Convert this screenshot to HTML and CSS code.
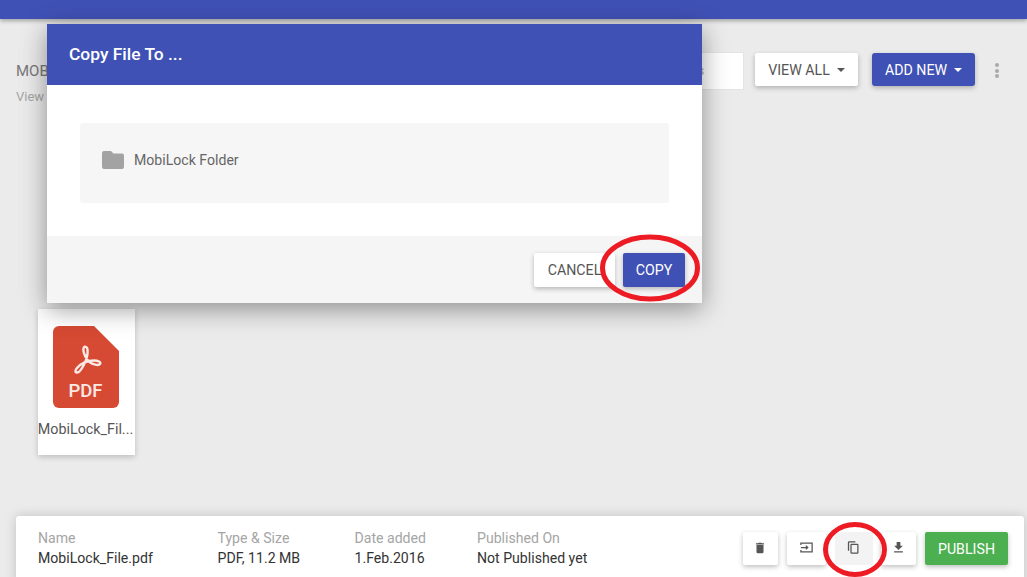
FILE: index.html
```html
<!DOCTYPE html>
<html lang="en">
<head>
<meta charset="utf-8">
<title>Files</title>
<link rel="stylesheet" href="styles.css">
</head>
<body>
<div class="topbar"></div>
<div class="toolbar">
  <div class="heading">
    <div class="title">MOBILOCK</div>
    <div class="subtitle">View</div>
  </div>
  <div class="actions">
    <div class="search">Search files</div>
    <button class="btn btn-white btn-view">VIEW ALL<span class="caret"></span></button>
    <button class="btn btn-blue btn-add">ADD NEW<span class="caret"></span></button>
    <div class="kebab"><i></i><i></i><i></i></div>
  </div>
</div>
<div class="grid">
  <div class="file-card">
    <svg class="pdf" viewBox="0 0 66 82" width="66" height="82" aria-hidden="true">
      <path d="M6 0H41L66 25V76a6 6 0 0 1-6 6H6a6 6 0 0 1-6-6V6a6 6 0 0 1 6-6Z" fill="#d64933"/>
      <path d="M33 21c-2-1-3 1-2.500 4 .6 4 3 8 6 11 3 2.500 9 4 10.500 2 1.500-2-2-3.500-6-3.500-6 0-13 3-17 7.500-2 2.500-2 4-.5 4.500 2 .5 5-3 7.500-8 2.500-5 4-11 3.500-15-.2-1.500-.8-2.300-1.500-2.500Z" fill="none" stroke="#fbe9e6" stroke-width="2.400"/>
      <text class="pdf-text" x="32.500" y="71" text-anchor="middle">PDF</text>
    </svg>
    <div class="file-name">MobiLock_Fil...</div>
  </div>
</div>
<div class="details">
  <div class="col col-name"><div class="label">Name</div><div class="value">MobiLock_File.pdf</div></div>
  <div class="col col-type"><div class="label">Type &amp; Size</div><div class="value">PDF, 11.2 MB</div></div>
  <div class="col col-date"><div class="label">Date added</div><div class="value">1.Feb.2016</div></div>
  <div class="col col-pub"><div class="label">Published On</div><div class="value">Not Published yet</div></div>
  <div class="detail-actions">
    <button class="btn btn-white icon-btn ib-trash" aria-label="Delete">
      <svg viewBox="0 0 24 24" width="14" height="14"><path d="M6 19a2 2 0 0 0 2 2h8a2 2 0 0 0 2-2V7H6v12ZM19 4h-3.500l-1-1h-5l-1 1H5v2h14V4Z" fill="#555"/></svg>
    </button>
    <button class="btn btn-white icon-btn ib-move" aria-label="Move">
      <svg viewBox="0 0 24 24" width="15" height="15"><path d="M3 8V5h18v14H3v-3M3 12h11M11 9l3 3-3 3" fill="none" stroke="#555" stroke-width="2"/></svg>
    </button>
    <button class="btn icon-btn ib-copy" aria-label="Copy">
      <svg viewBox="0 0 24 24" width="15" height="15"><path d="M15 2H5a2 2 0 0 0-2 2v13h2V4h10V2Zm3 4H9a2 2 0 0 0-2 2v12a2 2 0 0 0 2 2h9a2 2 0 0 0 2-2V8a2 2 0 0 0-2-2Zm0 14H9V8h9v12Z" fill="#555"/></svg>
    </button>
    <button class="btn btn-white icon-btn ib-down" aria-label="Download">
      <svg viewBox="0 0 24 24" width="15" height="15"><path d="M19 9h-4V3H9v6H5l7 7 7-7ZM5 18v2h14v-2H5Z" fill="#555"/></svg>
    </button>
    <button class="btn btn-green">PUBLISH</button>
  </div>
</div>

<div class="modal">
  <div class="modal-head">Copy File To ...</div>
  <div class="modal-body">
    <div class="folder-box">
      <svg viewBox="0 0 22 18" width="22" height="18" aria-hidden="true"><path d="M2 0h7l2.500 2.500H20a2 2 0 0 1 2 2V16a2 2 0 0 1-2 2H2a2 2 0 0 1-2-2V2a2 2 0 0 1 2-2Z" fill="#a3a3a3"/></svg>
      <span class="folder-name">MobiLock Folder</span>
    </div>
  </div>
  <div class="modal-foot">
    <button class="btn btn-white btn-cancel">CANCEL</button>
    <button class="btn btn-blue btn-copy">COPY</button>
  </div>
</div>

<svg class="marks" width="1027" height="577" aria-hidden="true">
  <ellipse cx="650" cy="268" rx="47.500" ry="31" />
  <ellipse cx="855" cy="549.500" rx="29.500" ry="25" />
</svg>
</body>
</html>
```
FILE: styles.css
```css
* { box-sizing: border-box; }
html, body { margin: 0; padding: 0; height: 577px; overflow: hidden; }
body {
  position: relative;
  background: #ebebeb;
  font-family: Roboto, "Liberation Sans", sans-serif;
  font-size: 14px;
  color: #555;
}
.topbar {
  height: 19px;
  background: #3f51b5;
  box-shadow: 0 2px 4px rgba(0,0,0,.3);
}
.toolbar {
  display: flex;
  justify-content: space-between;
  align-items: flex-start;
  height: 290px;
  padding: 33px 28px 0 16px;
}
.heading { padding-top: 10px; }
.title { font-size: 15px; line-height: 18px; color: #777; }
.subtitle { margin-top: 8px; font-size: 13px; line-height: 18px; color: #a5a5a5; }
.actions { display: flex; align-items: flex-start; }
.search {
  width: 200px;
  height: 38px;
  background: #fff;
  border: 1px solid #e4e4e4;
  color: #aaa;
  font-size: 13px;
  line-height: 36px;
  padding-left: 92px;
  white-space: nowrap;
  overflow: hidden;
}
.btn {
  border: 0;
  border-radius: 2px;
  font-family: inherit;
  font-size: 14.200px;
  padding: 0;
  height: 33px;
  display: inline-flex;
  align-items: center;
  justify-content: center;
  box-shadow: 0 2px 5px rgba(0,0,0,.25);
}
.btn-white { background: #fff; color: #555; }
.btn-blue { background: #3f51b5; color: #fff; }
.btn-green { background: #4caf50; color: #fff; width: 83px; margin-left: 9px; }
.btn-view { width: 103px; margin: 1px 0 0 11px; }
.btn-add { width: 103px; margin: 1px 0 0 14px; border-radius: 3px; }
.caret {
  width: 0; height: 0;
  margin-left: 7px;
  border-left: 4px solid transparent;
  border-right: 4px solid transparent;
  border-top: 4px solid currentColor;
}
.kebab { display: flex; flex-direction: column; gap: 1.500px; margin: 11px 0 0 20px; }
.kebab i { width: 4px; height: 4px; border-radius: 50%; background: #aaa; }
.grid { display: flex; padding-left: 38px; }
.file-card {
  width: 97px;
  height: 146px;
  background: #fff;
  box-shadow: 0 2px 6px rgba(0,0,0,.2);
  display: flex;
  flex-direction: column;
  align-items: center;
  padding-top: 17px;
}
.pdf { display: block; flex: none; margin-left: -1px; }
.pdf-text { font-family: Roboto, "Liberation Sans", sans-serif; font-size: 18.500px; font-weight: 500; fill: #fbe9e6; }
.file-name { margin: 12px 0 0 -2px; font-size: 14.300px; line-height: 18px; color: #555; white-space: nowrap; }
.details {
  position: absolute;
  left: 16px;
  top: 516px;
  width: 1008px;
  height: 70px;
  background: #fff;
  border-radius: 3px;
  box-shadow: 0 0 12px rgba(0,0,0,.18);
  display: flex;
  padding: 12px 16px 0 22px;
}
.col { line-height: 20px; font-size: 14.100px; white-space: nowrap; }
.col-name { width: 179.500px; }
.col-type { width: 137px; }
.col-date { width: 122.500px; }
.label { color: #a5a5a5; }
.value { color: #333; }
.detail-actions { margin-left: auto; display: flex; align-items: flex-start; padding-top: 4px; }
.icon-btn { width: 35px; }
.icon-btn svg { margin: -2px 0 0 -1px; }
.ib-move { width: 39px; margin-left: 9px; }
.ib-copy { width: 38px; margin-left: 9px; background: #f3f3f3; box-shadow: none; }
.ib-down { margin-left: 8px; }
.modal {
  position: absolute;
  left: 47px;
  top: 24px;
  width: 655px;
  height: 279px;
  background: #fff;
  box-shadow: 0 6px 24px rgba(0,0,0,.4);
  display: flex;
  flex-direction: column;
}
.modal-head {
  height: 61px;
  flex: none;
  background: #3f51b5;
  color: #fff;
  font-size: 17.400px;
  font-weight: 500;
  line-height: 61px;
  padding-left: 22px;
}
.modal-body { flex: 1; padding: 38px 33px 0; }
.folder-box {
  height: 80px;
  background: #f6f6f6;
  border-radius: 3px;
  display: flex;
  align-items: center;
  gap: 10px;
  padding: 0 22px 7px;
}
.folder-name { font-size: 14.100px; color: #666; }
.modal-foot {
  height: 67px;
  flex: none;
  background: #f5f5f5;
  display: flex;
  justify-content: flex-end;
  gap: 8px;
  padding: 17px 17px 0 0;
}
.btn-cancel { width: 81px; height: 34px; }
.btn-copy { width: 62px; height: 34px; }
.marks { position: absolute; left: 0; top: 0; pointer-events: none; }
.marks ellipse { fill: none; stroke: #ed1c24; stroke-width: 5; }
```
